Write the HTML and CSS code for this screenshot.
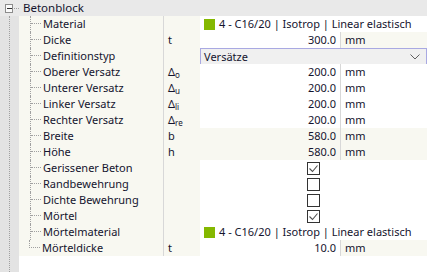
FILE: index.html
```html
<!DOCTYPE html>
<html>
<head>
<meta charset="utf-8">
<link rel="stylesheet" href="styles.css">
</head>
<body>
<div class="panel">
  <div class="head">
    <div class="toggle"><span class="box"><span class="minus"></span></span><span class="hline"></span></div>
    <div class="title">Betonblock</div>
  </div>
  <div class="main">
    <div class="gutter"><span class="vline"></span></div>
    <div class="rows">
      <div class="row">
        <div class="lab"><span class="br"><i></i></span>Material</div>
        <div class="sym"></div>
        <div class="val span"><span class="mat"></span>4 - C16/20 | Isotrop | Linear elastisch</div>
      </div>
      <div class="row">
        <div class="lab"><span class="br"><i></i></span>Dicke</div>
        <div class="sym">t</div>
        <div class="val num">300.0</div>
        <div class="unit">mm</div>
      </div>
      <div class="row">
        <div class="lab"><span class="br"><i></i></span>Definitionstyp</div>
        <div class="sym"></div>
        <div class="val span drop">Versätze<svg class="chev" width="10" height="6" viewBox="0 0 10 6"><path d="M0.5 0.5 L5 5 L9.5 0.5" fill="none" stroke="#606060" stroke-width="1"/></svg></div>
      </div>
      <div class="row">
        <div class="lab"><span class="br"><i></i></span>Oberer Versatz</div>
        <div class="sym">Δ<sub>o</sub></div>
        <div class="val num">200.0</div>
        <div class="unit edit">mm</div>
      </div>
      <div class="row">
        <div class="lab"><span class="br"><i></i></span>Unterer Versatz</div>
        <div class="sym">Δ<sub>u</sub></div>
        <div class="val num">200.0</div>
        <div class="unit edit">mm</div>
      </div>
      <div class="row">
        <div class="lab"><span class="br"><i></i></span>Linker Versatz</div>
        <div class="sym">Δ<sub>li</sub></div>
        <div class="val num">200.0</div>
        <div class="unit edit">mm</div>
      </div>
      <div class="row">
        <div class="lab"><span class="br"><i></i></span>Rechter Versatz</div>
        <div class="sym">Δ<sub>re</sub></div>
        <div class="val num">200.0</div>
        <div class="unit edit">mm</div>
      </div>
      <div class="row">
        <div class="lab"><span class="br"><i></i></span>Breite</div>
        <div class="sym">b</div>
        <div class="val num ro">580.0</div>
        <div class="unit">mm</div>
      </div>
      <div class="row">
        <div class="lab"><span class="br"><i></i></span>Höhe</div>
        <div class="sym">h</div>
        <div class="val num ro">580.0</div>
        <div class="unit">mm</div>
      </div>
      <div class="row">
        <div class="lab"><span class="br"><i></i></span>Gerissener Beton</div>
        <div class="sym"></div>
        <div class="val span chk"><span class="cb"><svg width="11" height="11" viewBox="0 0 11 11"><path d="M1.5 5.5 L4.5 8.5 L9.5 2.5" fill="none" stroke="#505050" stroke-width="1.1"/></svg></span></div>
      </div>
      <div class="row">
        <div class="lab"><span class="br"><i></i></span>Randbewehrung</div>
        <div class="sym"></div>
        <div class="val span chk"><span class="cb"></span></div>
      </div>
      <div class="row">
        <div class="lab"><span class="br"><i></i></span>Dichte Bewehrung</div>
        <div class="sym"></div>
        <div class="val span chk"><span class="cb"></span></div>
      </div>
      <div class="row">
        <div class="lab"><span class="br"><i></i></span>Mörtel</div>
        <div class="sym"></div>
        <div class="val span chk"><span class="cb"><svg width="11" height="11" viewBox="0 0 11 11"><path d="M1.5 5.5 L4.5 8.5 L9.5 2.5" fill="none" stroke="#505050" stroke-width="1.1"/></svg></span></div>
      </div>
      <div class="row">
        <div class="lab"><span class="br"><i></i></span>Mörtelmaterial</div>
        <div class="sym"></div>
        <div class="val span"><span class="mat"></span>4 - C16/20 | Isotrop | Linear elastisch</div>
      </div>
      <div class="row last">
        <div class="lab"><span class="br"><i></i></span>Mörteldicke</div>
        <div class="sym">t</div>
        <div class="val num">10.0</div>
        <div class="unit">mm</div>
      </div>
    </div>
  </div>
</div>
</body>
</html>
```
FILE: styles.css
```css
html, body {
  margin: 0;
  padding: 0;
  background: #ffffff;
}
body {
  font-family: "Noto Sans", "Open Sans", sans-serif;
  font-size: 11px;
  color: #14142e;
  width: 427px;
  height: 272px;
  overflow: hidden;
}
.panel {
  display: flex;
  flex-direction: column;
  height: 272px;
}
.head {
  display: flex;
  height: 16px;
  background: #e9e9e9;
  line-height: 16px;
  font-size: 11.5px;
}
.toggle {
  width: 19px;
  display: flex;
  align-items: flex-start;
  padding-top: 4px;
  box-sizing: border-box;
}
.box {
  margin-left: 5px;
  width: 9px;
  height: 9px;
  box-sizing: border-box;
  border: 1px solid #8c8c8c;
  background: #fafafa;
  display: flex;
  align-items: center;
  justify-content: center;
}
.minus {
  width: 5px;
  height: 1px;
  background: #303030;
}
.hline {
  width: 5px;
  margin-top: 4px;
  margin-left: 1px;
  border-top: 1px dotted #a0a0a0;
}
.title {
  padding-left: 4px;
}
.main {
  flex: 1;
  display: flex;
}
.gutter {
  width: 19px;
  background: #e3e3e3;
  display: flex;
}
.vline {
  margin-left: 9px;
  width: 0;
  border-left: 1px dotted #a0a0a0;
}
.rows {
  flex: 1;
  display: flex;
  flex-direction: column;
}
.row {
  display: grid;
  grid-template-columns: 145px 36px 140px 1fr;
  height: 16px;
  line-height: 16px;
}
.lab {
  display: flex;
  background: #f8f8f1;
  border-right: 1px solid #d8d8d8;
  white-space: nowrap;
}
.br {
  margin-left: 11px;
  width: 10px;
  margin-right: 2px;
  border-left: 1px dotted #a0a0a0;
  flex: none;
}
.br i {
  display: block;
  height: 7px;
  border-bottom: 1px dotted #a0a0a0;
}
.last .br {
  border-left: none;
}
.last .br i {
  border-left: 1px dotted #a0a0a0;
  margin-left: -1px;
}
.sym {
  background: #f8f8f1;
  padding-left: 4px;
  white-space: nowrap;
}
.sym sub {
  font-size: 8px;
  vertical-align: -2px;
  line-height: 0;
}
.val {
  background: #ffffff;
  white-space: nowrap;
}
.num {
  text-align: right;
  padding-right: 4px;
}
.ro {
  background: #f8f8f1;
}
.unit {
  background: #f8f8f1;
  border-left: 1px solid #d8d8d8;
  padding-left: 4px;
}
.unit.edit {
  background: #ffffff;
}
.span {
  grid-column: 3 / 5;
  display: flex;
  align-items: center;
}
.mat {
  width: 11px;
  height: 11px;
  background: #84b800;
  margin-left: 4px;
  margin-right: 4px;
}
.drop {
  box-sizing: border-box;
  border: 1px solid #a9a9e2;
  background: #f0f0f0;
  padding-left: 3px;
  padding-right: 6px;
  justify-content: space-between;
}
.chk {
  justify-content: center;
}
.cb {
  width: 13px;
  height: 13px;
  box-sizing: border-box;
  border: 1px solid #333333;
  background: #ffffff;
  display: flex;
  align-items: center;
  justify-content: center;
}
```
